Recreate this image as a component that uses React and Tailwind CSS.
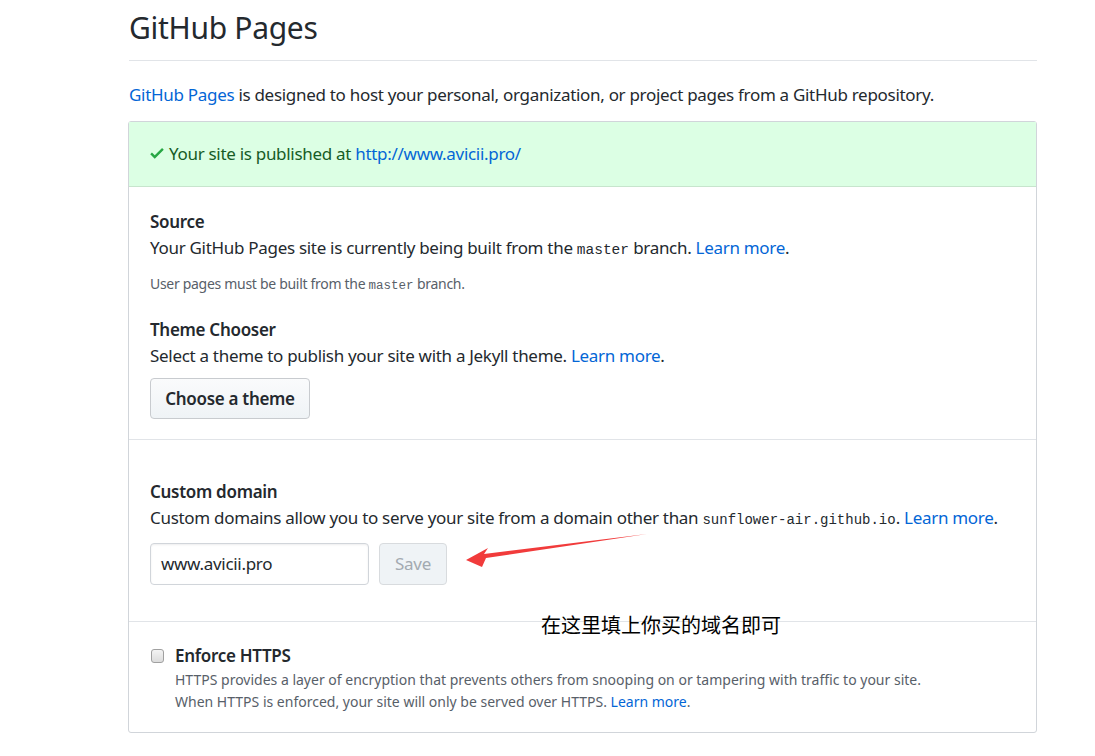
import React from 'react';

const body = { fontFamily: '"Segoe UI", "Noto Sans", "Liberation Sans", sans-serif' };

function Check() {
    return (
        <svg viewBox="0 0 12 16" className="w-[14px] h-[18px] fill-[#28a745] inline-block mr-[5px] -mt-[2px]">
            <path fillRule="evenodd" d="M12 5l-8 8-4-4 1.5-1.5L4 10l6.5-6.5L12 5z" />
        </svg>
    )
}

const Link = ({ children }) => <a className="text-[#0366d6]">{children}</a>

export default function App() {
    return (
        <div className="relative min-h-[756px] bg-white text-[#24292e] tracking-[-0.3px]" style={body}>
            <div className="pl-[128px] w-[1037px]">
                <h2 className="ml-px text-[30px] leading-[40px] pt-[8px] pb-[12px] border-b border-[#e1e4e8] font-normal">GitHub Pages</h2>
                <p className="ml-px mt-[21px] text-[17px] leading-[26px]">
                    <Link>GitHub Pages</Link> is designed to host your personal, organization, or project pages from a GitHub repository.
                </p>

                <div className="mt-[13px] border border-[#d1d5da] rounded-[3px]">
                    <div className="h-[65px] bg-[#dcffe4] border-b border-[#c7e5cd] flex items-center pl-[21px] text-[17px] text-[#165c26]">
                        <Check />Your site is published at&nbsp;<Link>http://www.avicii.pro/</Link>
                    </div>

                    <div className="px-[21px] pt-[22px] pb-[20px] border-b border-[#e1e4e8] text-[17px] leading-[26px]">
                        <h3 className="font-semibold">Source</h3>
                        <p>Your GitHub Pages site is currently being built from the <code className="font-['Liberation_Mono',monospace] text-[14.5px] leading-none tracking-normal">master</code> branch. <Link>Learn more</Link>.</p>
                        <p className="mt-[13px] text-[14px] leading-[20px] text-[#586069]">User pages must be built from the <code className="font-['Liberation_Mono',monospace] text-[12.5px] leading-none tracking-normal">master</code> branch.</p>
                        <h3 className="mt-[23px] font-semibold">Theme Chooser</h3>
                        <p>Select a theme to publish your site with a Jekyll theme. <Link>Learn more</Link>.</p>
                        <button className="mt-[9px] w-[160px] h-[41px] rounded-[4px] border border-[#c8cbcf] bg-gradient-to-b from-[#fafbfc] to-[#eff3f6] font-semibold text-[17px]">Choose a theme</button>
                    </div>

                    <div className="px-[21px] pt-[39px] pb-[36px] border-b border-[#e1e4e8] text-[17px] leading-[26px]">
                        <h3 className="font-semibold">Custom domain</h3>
                        <p>Custom domains allow you to serve your site from a domain other than <code className="font-['Liberation_Mono',monospace] text-[14px] leading-none tracking-normal">sunflower-air.github.io</code>. <Link>Learn more</Link>.</p>
                        <div className="mt-[12px] flex gap-[10px]">
                            <div className="w-[219px] h-[42px] border border-[#d1d5da] rounded-[4px] flex items-center px-[10px] shadow-[inset_0_1px_2px_rgba(27,31,35,0.075)]">www.avicii.pro</div>
                            <button className="w-[68px] h-[42px] border border-[#d8dbde] rounded-[4px] bg-[#eff3f6] text-[#a3aab1] text-[17px]">Save</button>
                        </div>
                    </div>

                    <div className="pl-[21px] pr-[21px] pt-[21px] pb-[19px]">
                        <div className="flex items-center h-[26px]">
                            <span className="w-[13px] h-[14px] ml-[1px] rounded-[3px] border border-[#a0a0a0] bg-gradient-to-b from-[#f4f4f4] to-[#dcdcdc]" />
                            <span className="ml-[11px] font-semibold text-[17px]">Enforce HTTPS</span>
                        </div>
                        <div className="pl-[25px] text-[14px] leading-[22px] text-[#586069] tracking-normal">
                            <p>HTTPS provides a layer of encryption that prevents others from snooping on or tampering with traffic to your site.</p>
                            <p>When HTTPS is enforced, your site will only be served over HTTPS. <Link>Learn more</Link>.</p>
                        </div>
                    </div>
                </div>
            </div>

            <svg className="absolute left-0 top-0 w-[1095px] h-[756px] pointer-events-none" viewBox="0 0 1095 756">
                <polygon points="466,560 488,548 484,554 647,534 486,558 482,567" fill="#f13b3b" />
            </svg>
            <div className="absolute left-[541px] top-[611px] text-[20px] leading-[28px] tracking-normal text-black font-['Noto_Sans_CJK_SC',sans-serif]">在这里填上你买的域名即可</div>
        </div>
    )
}
